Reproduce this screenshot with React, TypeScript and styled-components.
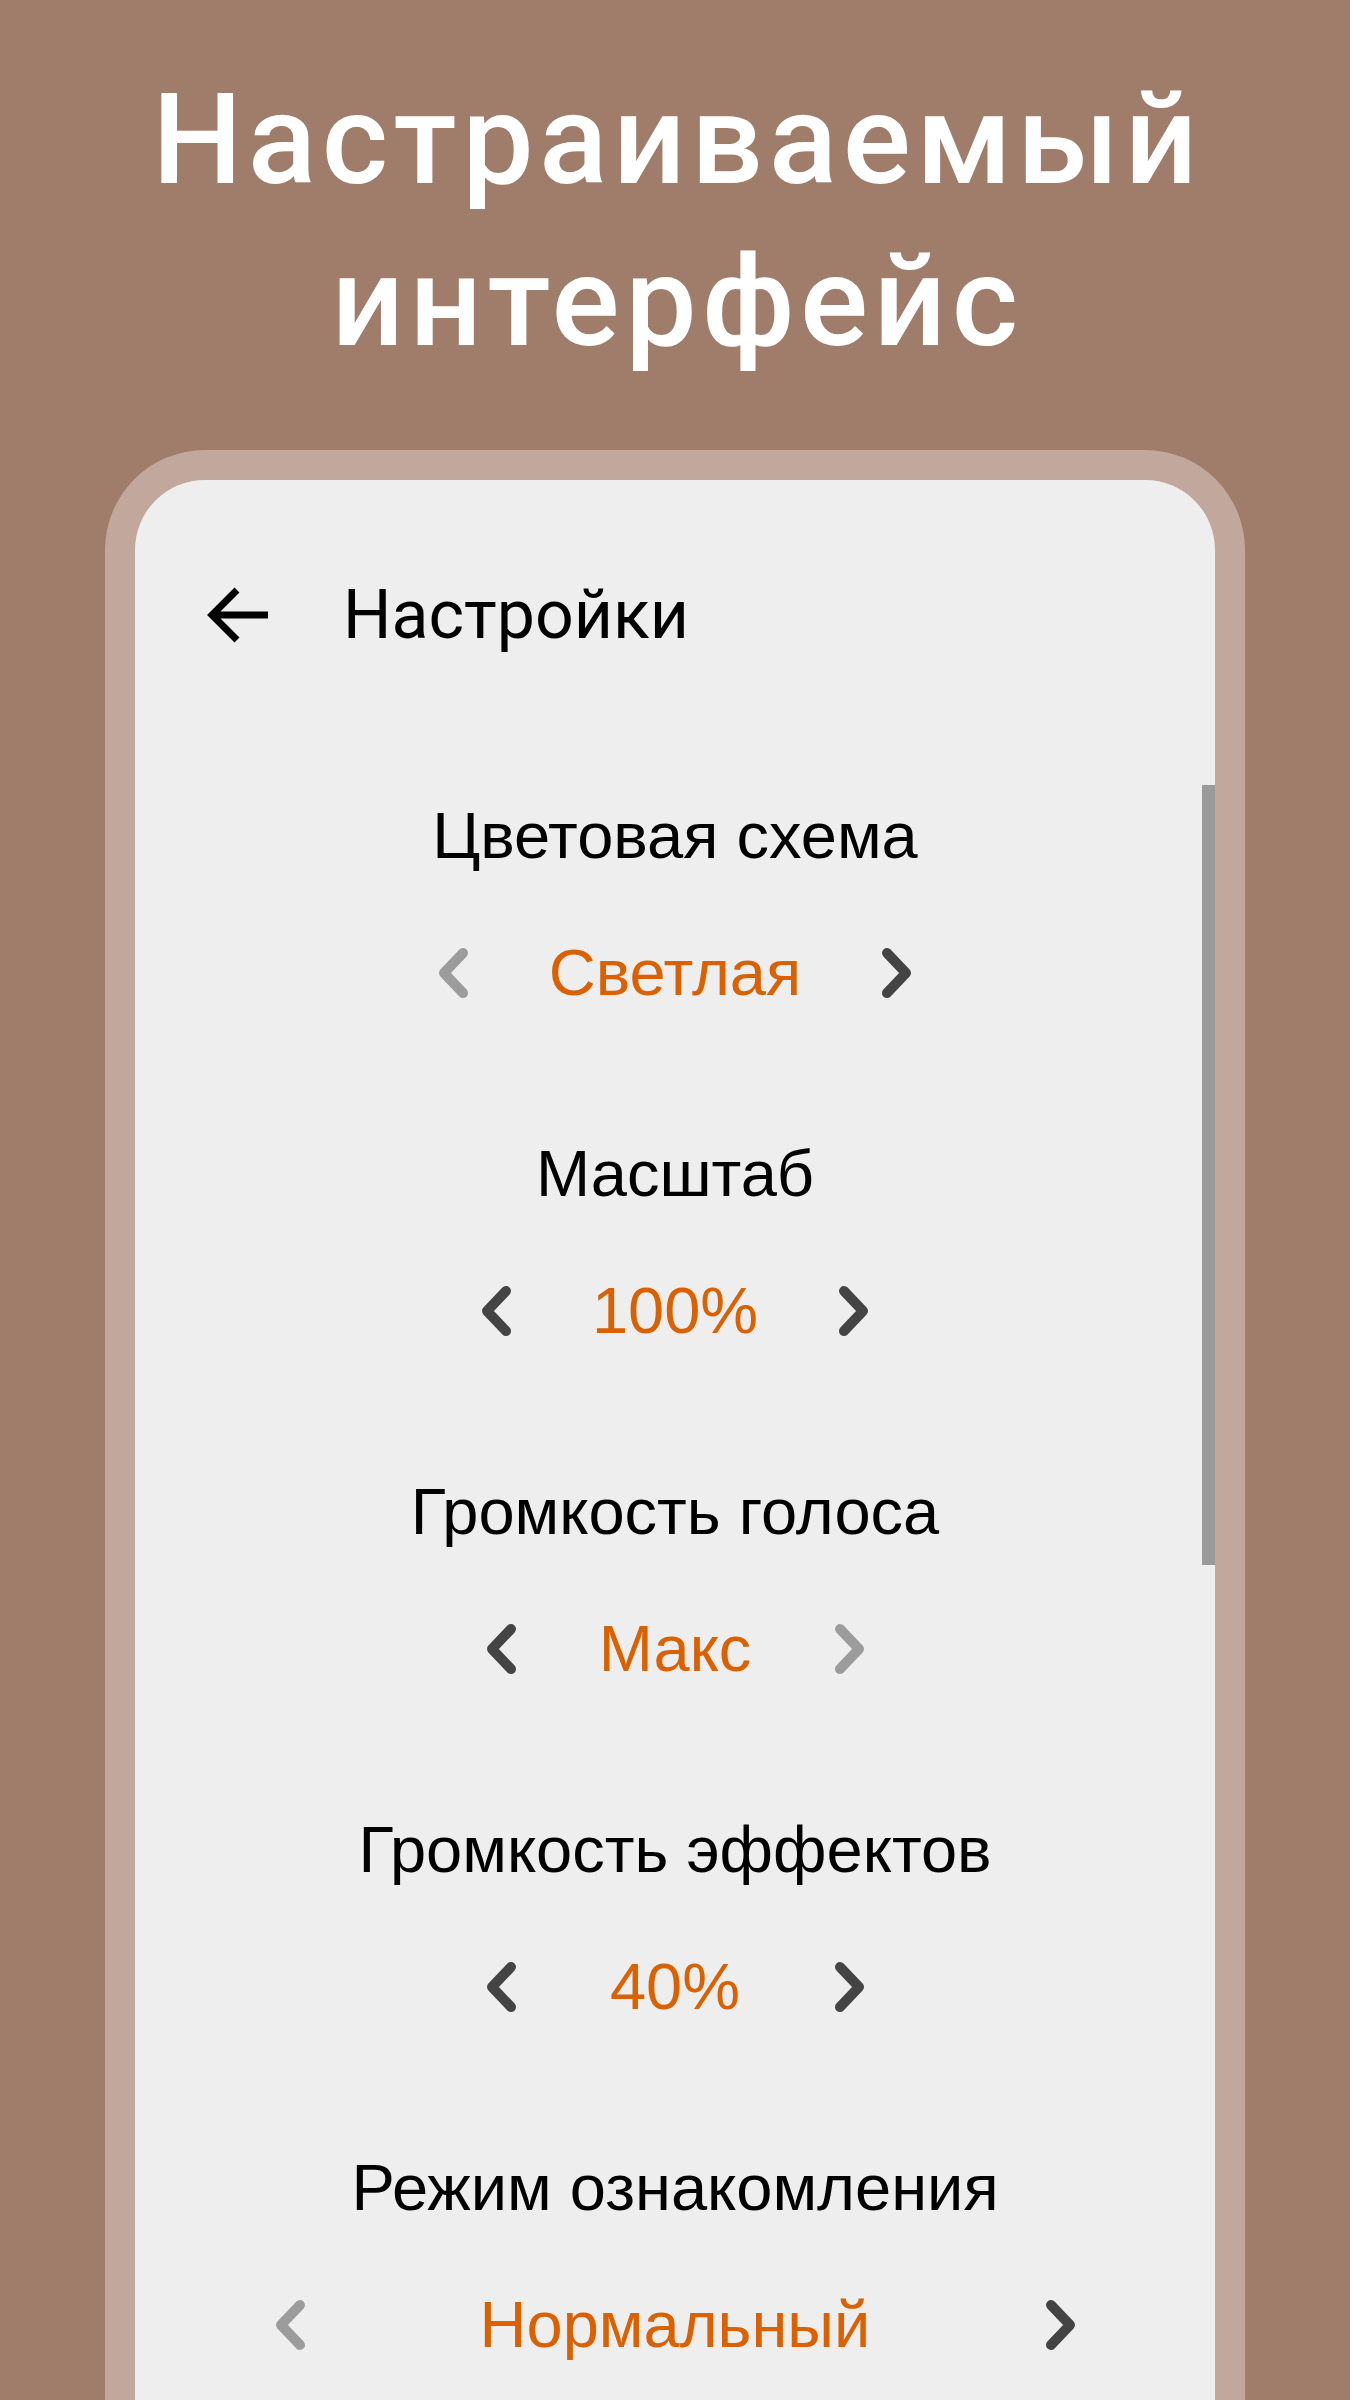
import styled, { createGlobalStyle } from 'styled-components';

const GlobalStyle = createGlobalStyle`
  html, body {
    margin: 0;
    padding: 0;
    background: #a07c6a;
  }
`;

interface Setting {
  label: string;
  value: string;
  canPrev: boolean;
  canNext: boolean;
  valueWidth?: number;
}

const settings: Setting[] = [
  { label: 'Цветовая схема', value: 'Светлая', canPrev: false, canNext: true },
  { label: 'Масштаб', value: '100%', canPrev: true, canNext: true },
  { label: 'Громкость голоса', value: 'Макс', canPrev: true, canNext: false },
  { label: 'Громкость эффектов', value: '40%', canPrev: true, canNext: true },
  { label: 'Режим ознакомления', value: 'Нормальный', canPrev: false, canNext: true, valueWidth: 579 },
];

const Page = styled.div`
  width: 1350px;
  height: 2400px;
  overflow: hidden;
  display: flex;
  flex-direction: column;
  align-items: center;
  padding-top: 59px;
  box-sizing: border-box;
  background: #a07c6a;
`;

const Headline = styled.h1`
  margin: 0;
  padding-left: 5px;
  font-family: Roboto, 'Noto Sans', sans-serif;
  font-weight: 500;
  font-size: 127px;
  line-height: 162px;
  letter-spacing: 5.5px;
  color: #ffffff;
  text-align: center;
`;

const PhoneFrame = styled.div`
  margin-top: 67px;
  width: 1140px;
  flex: 1;
  box-sizing: border-box;
  border: 30px solid #c2a89c;
  border-bottom: none;
  border-radius: 100px 100px 0 0;
  background: #eeeeee;
  position: relative;
`;

const Screen = styled.div`
  display: flex;
  flex-direction: column;
  padding-top: 90px;
`;

const Toolbar = styled.div`
  height: 90px;
  display: flex;
  align-items: center;
  padding-left: 71px;
  gap: 73px;
`;

const BackIcon = styled.svg`
  width: 64px;
  height: 58px;
  color: #000000;
`;

const ToolbarTitle = styled.span`
  font-family: Roboto, 'Noto Sans', sans-serif;
  font-size: 68px;
  line-height: 90px;
  color: #000000;
`;

const SettingsList = styled.div`
  margin-top: 136px;
  display: flex;
  flex-direction: column;
  gap: 121px;
`;

const Section = styled.section`
  display: flex;
  flex-direction: column;
  align-items: center;
  gap: 57px;
`;

const SectionLabel = styled.div`
  font-family: 'Liberation Sans', Arial, sans-serif;
  font-size: 65px;
  line-height: 80px;
  color: #000000;
`;

const Stepper = styled.div`
  display: flex;
  align-items: center;
  justify-content: center;
  gap: 80px;
  height: 80px;
`;

const StepValue = styled.span<{ $minWidth: number }>`
  min-width: ${p => p.$minWidth}px;
  text-align: center;
  font-family: 'Liberation Sans', Arial, sans-serif;
  font-size: 65px;
  line-height: 80px;
  color: #db6100;
`;

const Chevron = styled.svg<{ $enabled: boolean }>`
  width: 31px;
  height: 50px;
  flex: none;
  color: ${p => (p.$enabled ? '#444444' : '#9c9c9c')};
`;

const Scrollbar = styled.div`
  position: absolute;
  right: 0;
  top: 305px;
  width: 13px;
  height: 780px;
  background: #9a9a9a;
`;

const ChevronIcon = ({ dir, enabled }: { dir: 'left' | 'right'; enabled: boolean }) => (
  <Chevron $enabled={enabled} viewBox="0 0 31 50">
    <polyline
      points={dir === 'left' ? '25,5 6,25 25,45' : '6,5 25,25 6,45'}
      fill="none"
      stroke="currentColor"
      strokeWidth={10}
      strokeLinecap="round"
      strokeLinejoin="round"
    />
  </Chevron>
);

export default function App() {
  return (
    <>
      <GlobalStyle />
      <Page>
        <Headline>
          Настраиваемый
          <br />
          интерфейс
        </Headline>
        <PhoneFrame>
          <Screen>
            <Toolbar>
              <BackIcon viewBox="0 0 64 58">
                <path
                  d="M62 29H6M31 4L6 29L31 54"
                  fill="none"
                  stroke="currentColor"
                  strokeWidth={7}
                />
              </BackIcon>
              <ToolbarTitle>Настройки</ToolbarTitle>
            </Toolbar>
            <SettingsList>
              {settings.map(s => (
                <Section key={s.label}>
                  <SectionLabel>{s.label}</SectionLabel>
                  <Stepper>
                    <ChevronIcon dir="left" enabled={s.canPrev} />
                    <StepValue $minWidth={s.valueWidth ?? 157}>{s.value}</StepValue>
                    <ChevronIcon dir="right" enabled={s.canNext} />
                  </Stepper>
                </Section>
              ))}
            </SettingsList>
          </Screen>
          <Scrollbar />
        </PhoneFrame>
      </Page>
    </>
  );
}
